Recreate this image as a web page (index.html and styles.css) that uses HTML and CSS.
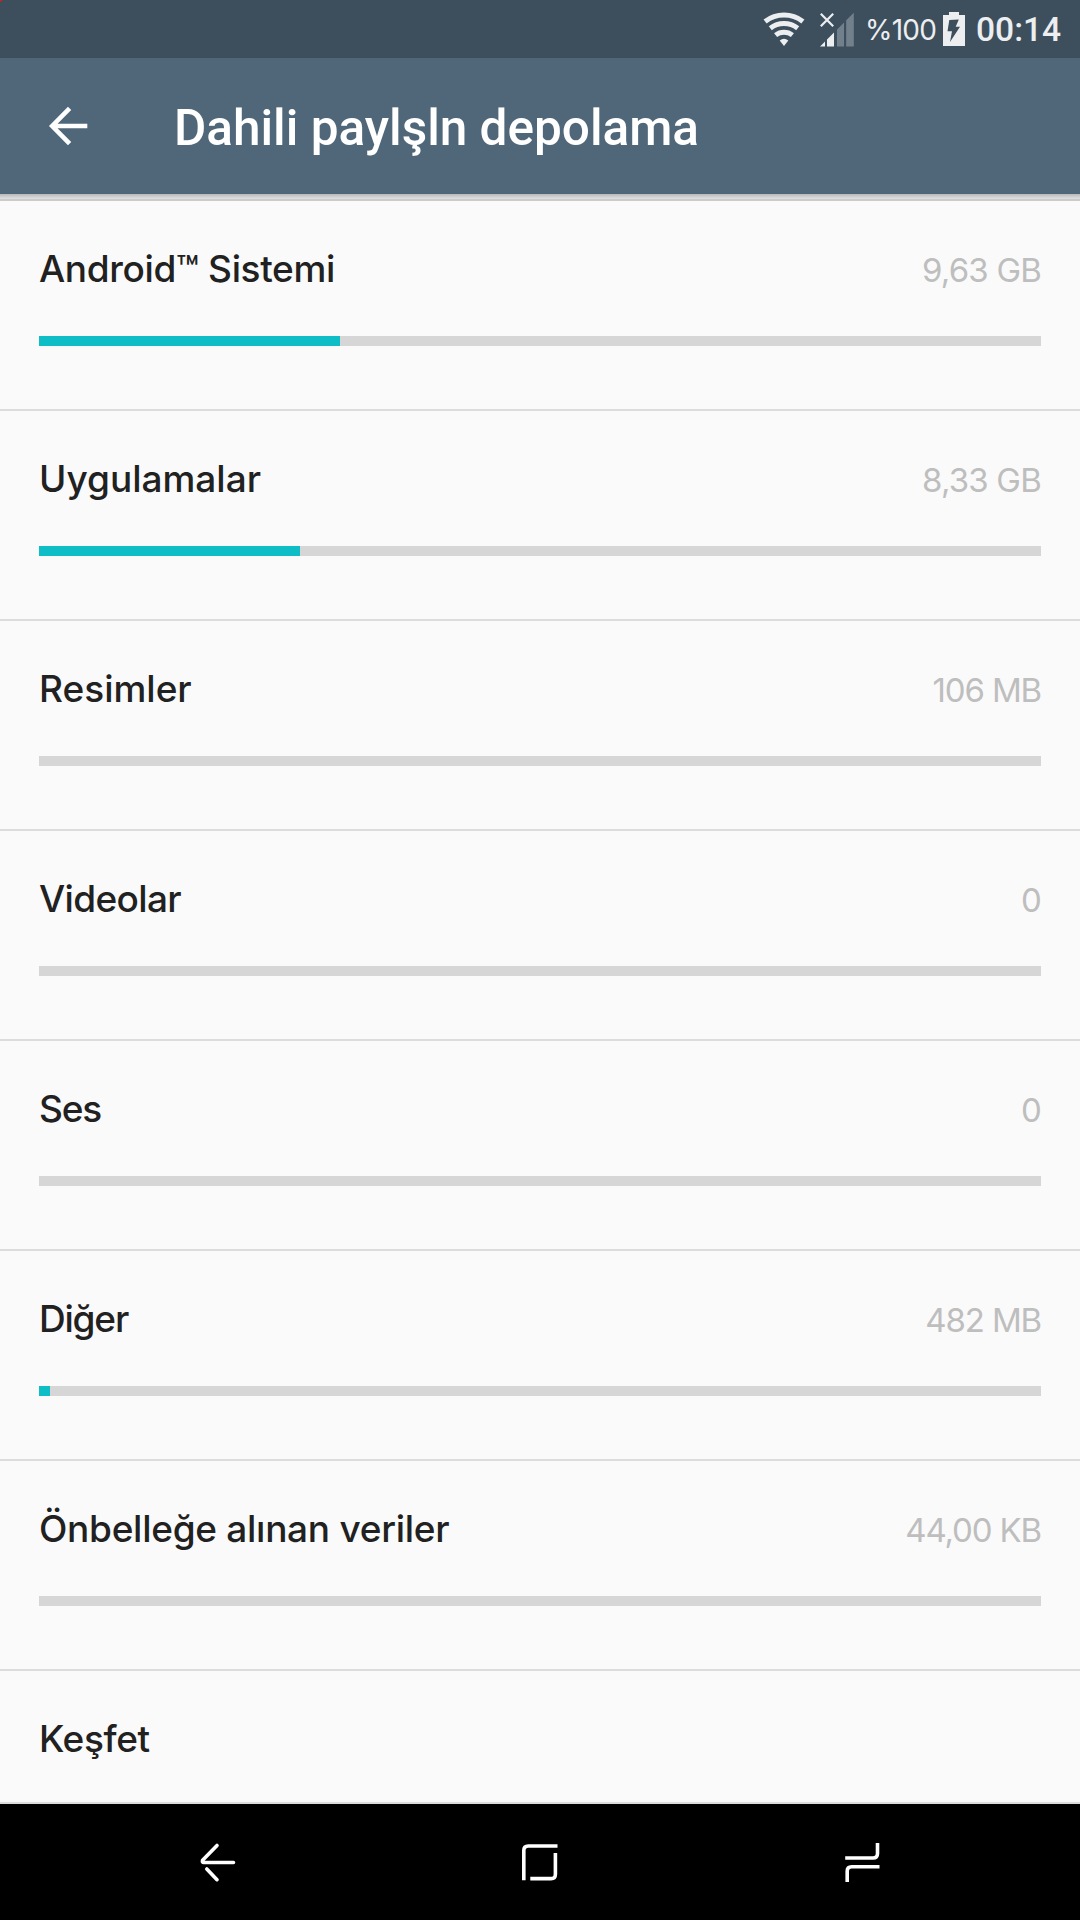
FILE: index.html
```html
<!DOCTYPE html>
<html lang="tr">
<head>
<meta charset="utf-8">
<title>Dahili paylşln depolama</title>
<link rel="stylesheet" href="styles.css">
</head>
<body>
<div class="screen">
  <div class="status">
    <i class="corner-mark"></i>
    <svg class="wifi" viewBox="0 0 42 36" fill="none" stroke="#eceef0" stroke-width="5">
      <path d="M2.1 10.4A31 31 0 0 1 39.9 10.4M7.3 17.2A22.5 22.5 0 0 1 34.7 17.2M12.6 24.1A13.7 13.7 0 0 1 29.4 24.1"/>
      <path d="M21 35L16.7 29.5A7 7 0 0 1 25.3 29.5Z" fill="#eceef0" stroke="none"/>
    </svg>
    <svg class="signal" viewBox="0 0 34 36" fill="#eceef0">
      <path d="M0 35.5L5 30.5V35.5ZM7 28.5L14 21.5V35.5H7Z"/>
      <path d="M17 18.5L24 11.5V35.5H17ZM26.2 9.3L33.8 1.7V35.5H26.2Z" fill="#72808c"/>
      <path d="M.8 2.8L13.2 15.2M13.2 2.8L.8 15.2" stroke="#eceef0" stroke-width="2.2"/>
    </svg>
    <span class="percent">%100</span>
    <svg class="battery" viewBox="0 0 22 36">
      <path d="M6 1H16V4H22V35H0V4H6Z" fill="#eceef0"/>
      <path d="M6.3 9L15.8 8.5L12.7 15.7H17L7 31L9 20.3H4.5Z" fill="#3d4f5d"/>
    </svg>
    <span class="clock">00:14</span>
  </div>
  <header class="toolbar">
    <svg class="back" viewBox="0 0 40 40" fill="none" stroke="#fff" stroke-width="4.6">
      <path d="M21.6 2.4L4.2 20L21.6 37.6M5 20H39.3"/>
    </svg>
    <h1 class="title">Dahili paylşln depolama</h1>
  </header>
  <div class="shade"></div>
  <main class="list">
    <section class="row">
      <div class="line"><span class="label ls-android">Android™ Sistemi</span><span class="value">9,63 GB</span></div>
      <div class="bar"><div class="fill" style="width:301px"></div></div>
    </section>
    <section class="row">
      <div class="line"><span class="label">Uygulamalar</span><span class="value">8,33 GB</span></div>
      <div class="bar"><div class="fill" style="width:261px"></div></div>
    </section>
    <section class="row">
      <div class="line"><span class="label">Resimler</span><span class="value tight">106 MB</span></div>
      <div class="bar"></div>
    </section>
    <section class="row">
      <div class="line"><span class="label ls-video">Videolar</span><span class="value">0</span></div>
      <div class="bar"></div>
    </section>
    <section class="row">
      <div class="line"><span class="label ls-short">Ses</span><span class="value">0</span></div>
      <div class="bar"></div>
    </section>
    <section class="row">
      <div class="line"><span class="label ls-short">Diğer</span><span class="value tight">482 MB</span></div>
      <div class="bar"><div class="fill" style="width:11px"></div></div>
    </section>
    <section class="row">
      <div class="line"><span class="label ls-cache">Önbelleğe alınan veriler</span><span class="value tight">44,00 KB</span></div>
      <div class="bar"></div>
    </section>
    <section class="row last">
      <div class="line"><span class="label ls-android">Keşfet</span></div>
    </section>
  </main>
  <nav class="nav">
    <svg viewBox="0 0 48 48"><path d="M23 7.5L8.6 22.2Q7.8 24.5 9.8 24.5H39.5M12.8 31L23 41.7" stroke-linecap="round"/></svg>
    <svg viewBox="0 0 48 48"><path d="M7.8 42.3V12.5Q7.8 8 12.3 8H41.5M14.3 40.6H35Q39.4 40.6 39.4 36.2V15"/></svg>
    <svg viewBox="0 0 48 48"><path d="M7.2 20H35Q39.5 20 39.5 15.5V5M9.2 44V33.3Q9.2 28.8 13.7 28.8H41.5"/></svg>
  </nav>
</div>
</body>
</html>
```
FILE: styles.css
```css
* { box-sizing: border-box; }

body {
  margin: 0;
  background: #fafafa;
  font-family: Inter, "Noto Sans", sans-serif;
}

.screen {
  display: flex;
  flex-direction: column;
  width: 1080px;
  height: 1920px;
  overflow: hidden;
}

svg { display: block; flex: none; }

.status {
  position: relative;
  display: flex;
  height: 58px;
  padding: 11px 17px 0 763px;
  background: #3d4f5d;
  color: #eceef0;
  white-space: nowrap;
}

.corner-mark {
  position: absolute;
  left: 0;
  top: 0;
  width: 3px;
  height: 2px;
  background: #d31f1f;
  clip-path: polygon(0 0, 100% 0, 0 100%);
}

.wifi { width: 42px; height: 36px; margin-right: 15px; }
.signal { width: 34px; height: 36px; }

.percent {
  width: 89px;
  padding-left: 11px;
  font-size: 28px;
  line-height: 38px;
  letter-spacing: -0.8px;
}

.battery { width: 22px; height: 36px; margin-right: 11px; }

.clock {
  font: 500 33.6px/38px Roboto, sans-serif;
}

.toolbar {
  display: flex;
  align-items: center;
  height: 136px;
  padding-left: 48px;
  background: #50677a;
}

.back { width: 40px; height: 40px; margin-right: 86px; }

.title {
  margin: 3px 0 0;
  color: #fff;
  font: 500 49.5px/60px Roboto, sans-serif;
  white-space: nowrap;
}

.shade {
  flex: none;
  height: 7px;
  background: linear-gradient(#b9b9b9, #e2e2e2 5px, #cbcbcb 5px, #cbcbcb);
}

.list { height: 1603px; }

.row {
  height: 210px;
  padding: 48px 39px 0;
  border-bottom: 2px solid #dcdcdc;
}

.row.last { height: 133px; }

.line {
  display: flex;
  justify-content: space-between;
  align-items: baseline;
  height: 40px;
  line-height: 40px;
  margin-bottom: 47px;
  white-space: nowrap;
}

.label {
  color: #212121;
  font-size: 37px;
  font-weight: 500;
}

.ls-android { letter-spacing: -0.36px; }
.ls-video { letter-spacing: -0.65px; }
.ls-short { letter-spacing: -1.2px; }
.ls-cache { letter-spacing: -0.28px; }

.value {
  color: #bebebe;
  font-size: 33px;
  letter-spacing: -0.8px;
}

.tight { letter-spacing: -1.15px; }

.bar { height: 10px; background: #d6d6d6; }
.fill { height: 10px; background: #0ebdc5; }

.nav {
  display: flex;
  justify-content: space-between;
  align-items: center;
  height: 116px;
  padding: 0 194px;
  background: #000;
}

.nav svg {
  width: 48px;
  height: 48px;
  fill: none;
  stroke: #fff;
  stroke-width: 3.6;
}
```
